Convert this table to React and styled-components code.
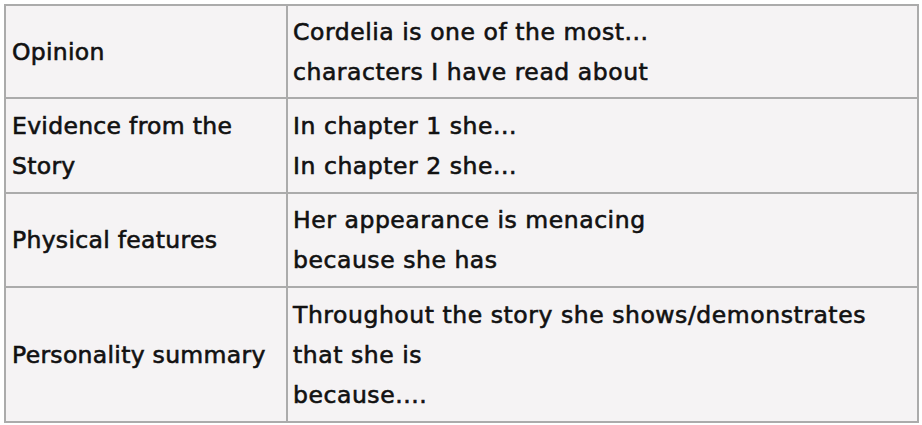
import React from "react";
import styled, { createGlobalStyle } from "styled-components";

const GlobalStyle = createGlobalStyle`
	html, body {
		margin: 0;
		padding: 0;
		background: #ffffff;
	}
	body {
		font-family: "DejaVu Sans", "Liberation Sans", sans-serif;
	}
`;

const Page = styled.div`
	padding: 4px 3px 3px 4px;
	width: 922px;
	height: 425px;
	box-sizing: border-box;
`;

const Table = styled.table`
	width: 100%;
	border-collapse: collapse;
	background-color: #f5f3f4;
	border: 2px solid #ababab;
	table-layout: fixed;
`;

const Row = styled.tr`
	height: ${props => props.$height}px;
	border-bottom: 2px solid #ababab;
`;

const Cell = styled.td`
	vertical-align: middle;
	font-size: 23.5px;
	line-height: 40px;
	color: #111;
	letter-spacing: 0.55px;
	white-space: nowrap;
	-webkit-text-stroke: 0.6px #111;
`;

const Label = styled(Cell)`
	width: 268px;
	padding: 0 6px;
	border-right: 2px solid #ababab;
	letter-spacing: 0.3px;
`;

const Body = styled(Cell)`
	padding: 0 5px;
`;

const rows = [
	{ label: ["Opinion"], text: ["Cordelia is one of the most...", "characters I have read about"], height: 93 },
	{ label: ["Evidence from the", "Story"], text: ["In chapter 1 she...", "In chapter 2 she..."], height: 95 },
	{ label: ["Physical features"], text: ["Her appearance is menacing", "because she has"], height: 94 },
	{
		label: ["Personality summary"],
		text: ["Throughout the story she shows/demonstrates", "that she is", "because...."],
		height: 135,
	},
];

const Lines = ({ lines }) =>
	lines.map((line, i) => (
		<React.Fragment key={i}>
			{line}
			{i < lines.length - 1 && <br />}
		</React.Fragment>
	));

const App = () => (
	<Page>
		<GlobalStyle />
		<Table>
			<tbody>
				{rows.map(row => (
					<Row key={row.label[0]} $height={row.height}>
						<Label>
							<Lines lines={row.label} />
						</Label>
						<Body>
							<Lines lines={row.text} />
						</Body>
					</Row>
				))}
			</tbody>
		</Table>
	</Page>
);

export default App;
